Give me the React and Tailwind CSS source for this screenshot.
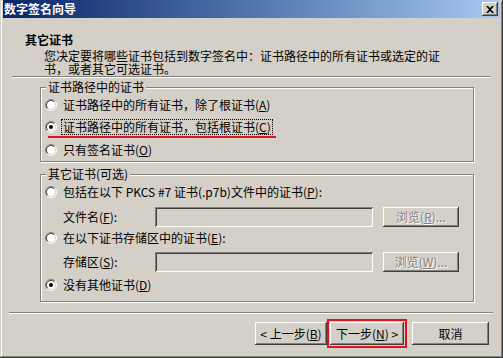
import React from "react";

const FONT = { fontFamily: '"Noto Sans CJK SC", "Noto Sans", sans-serif' };

function RadioIcon({ checked }) {
  return (
    <svg width="12" height="12" viewBox="0 0 12 12" className="shrink-0">
      <circle cx="6" cy="6" r="5" fill="#fff" />
      <path d="M2.1 9.9 A5.5 5.5 0 0 1 9.9 2.1" stroke="#808080" strokeWidth="1" fill="none" />
      <path d="M9.9 2.1 A5.5 5.5 0 0 1 2.1 9.9" stroke="#ffffff" strokeWidth="1" fill="none" />
      <path d="M2.8 9.2 A4.5 4.5 0 0 1 9.2 2.8" stroke="#404040" strokeWidth="1" fill="none" />
      <path d="M9.2 2.8 A4.5 4.5 0 0 1 2.8 9.2" stroke="#d4d0c8" strokeWidth="1" fill="none" />
      {checked && <circle cx="6" cy="6" r="2" fill="#000" />}
    </svg>
  );
}

function Radio({ checked, focus, children, className = "" }) {
  return (
    <div className={`relative flex items-center h-[16px] pl-[4px] ${className}`}>
      <RadioIcon checked={checked} />
      <span
        className={`ml-[4px] px-[1px] border leading-[14px] whitespace-nowrap ${
          focus ? "border-dotted border-black" : "border-transparent"
        }`}
      >
        {children}
      </span>
    </div>
  );
}

function Group({ title, className = "", children }) {
  return (
    <div
      className={`relative ml-[37px] w-[434px] border border-[#808080] shadow-[inset_1px_1px_0_#fff,1px_1px_0_#fff] ${className}`}
    >
      <span className="absolute left-[5px] top-[-8px] bg-[#d4d0c8] px-[2px] leading-[14px] whitespace-nowrap">
        {title}
      </span>
      {children}
    </div>
  );
}

const bevel =
  "bg-[#d4d0c8] shadow-[inset_-1px_-1px_#404040,inset_1px_1px_#fff,inset_-2px_-2px_#808080,inset_2px_2px_#d4d0c8]";

function Button({ children, className = "", disabled }) {
  return (
    <div
      className={`${bevel} flex items-center justify-center leading-[14px] whitespace-nowrap ${
        disabled ? "text-[#808080] [text-shadow:1px_1px_0_#fff]" : "text-black"
      } ${className}`}
    >
      {children}
    </div>
  );
}

function Input() {
  return (
    <div className="w-[218px] h-[20px] bg-[#d4d0c8] shadow-[inset_1px_1px_#808080,inset_-1px_-1px_#fff,inset_2px_2px_#404040,inset_-2px_-2px_#d4d0c8]" />
  );
}

function FieldRow({ label, browse, className = "" }) {
  return (
    <div className={`flex items-center pl-[22px] ${className}`}>
      <span className="w-[92px] leading-[14px] whitespace-nowrap">{label}</span>
      <Input />
      <Button disabled className="ml-[10px] w-[76px] h-[20px]">
        {browse}
      </Button>
    </div>
  );
}

function Sep({ className = "" }) {
  return <div className={`h-[2px] border-t border-t-[#808080] border-b border-b-white ${className}`} />;
}

export default function App() {
  return (
    <div
      style={FONT}
      className="w-[503px] h-[358px] overflow-hidden bg-[#d4d0c8] text-[12px] text-black flex flex-col px-[3px] pb-[3px] shadow-[inset_-1px_-1px_#404040,inset_1px_1px_#d4d0c8,inset_-2px_-2px_#808080,inset_2px_2px_#fff]"
    >
      {/* Title bar */}
      <div className="h-[18px] shrink-0 flex items-center justify-between bg-gradient-to-r from-[#0a246a] to-[#a6caf0] pl-[1px] pr-[2px]">
        <span className="text-white font-bold leading-[14px] whitespace-nowrap">数字签名向导</span>
        <div className={`${bevel} w-[16px] h-[14px] flex items-center justify-center`}>
          <svg width="8" height="7" viewBox="0 0 8 7">
            <path d="M0 0h2l2 2 2-2h2L5 3.5 8 7H6L4 5 2 7H0l3-3.5z" fill="#000" />
          </svg>
        </div>
      </div>

      {/* Header */}
      <div className="mt-[15px] pl-[22px]">
        <div className="font-bold leading-[13px] whitespace-nowrap">其它证书</div>
        <div className="mt-[3px] pl-[19px] leading-[13px] whitespace-nowrap">
          您决定要将哪些证书包括到数字签名中：证书路径中的所有证书或选定的证
          <br />
          书，或者其它可选证书。
        </div>
      </div>
      <Sep className="mt-[1px] ml-[9px] w-[478px]" />

      {/* Group 1 */}
      <Group title="证书路径中的证书" className="mt-[9px] pt-[9px] pb-[3px]">
        <Radio>
          证书路径中的所有证书，除了根证书(<u>A</u>)
        </Radio>
        <Radio checked focus className="mt-[6px]">
          证书路径中的所有证书，包括根证书(<u>C</u>)
          <span className="absolute left-[7px] top-[17px] w-[228px] h-[2px] bg-[#e0141e]" />
        </Radio>
        <Radio className="mt-[7px]">
          只有签名证书(<u>O</u>)
        </Radio>
      </Group>

      {/* Group 2 */}
      <Group title="其它证书(可选)" className="mt-[12px] pt-[9px] pb-[8px]">
        <Radio>
          包括在以下 PKCS #7 证书(.p7b)文件中的证书(<u>P</u>):
        </Radio>
        <FieldRow
          className="mt-[7px]"
          label={
            <>
              文件名(<u>F</u>):
            </>
          }
          browse={
            <>
              浏览(<u>R</u>)...
            </>
          }
        />
        <Radio className="mt-[3px]">
          在以下证书存储区中的证书(<u>E</u>):
        </Radio>
        <FieldRow
          className="mt-[6px]"
          label={
            <>
              存储区(<u>S</u>):
            </>
          }
          browse={
            <>
              浏览(<u>W</u>)...
            </>
          }
        />
        <Radio checked className="mt-[5px]">
          没有其他证书(<u>D</u>)
        </Radio>
      </Group>

      <Sep className="mt-[10px] ml-[6px] w-[484px]" />

      {/* Buttons */}
      <div className="mt-[8px] flex justify-end pr-[11px]">
        <Button className="w-[72px] h-[23px]">
          &lt; 上一步(<u>B</u>)
        </Button>
        <Button className="ml-[3px] w-[74px] h-[23px] outline-2 outline-solid outline-[#e0141e] outline-offset-[1px]">
          下一步(<u>N</u>) &gt;
        </Button>
        <Button className="ml-[8px] w-[77px] h-[23px]">取消</Button>
      </div>
    </div>
  );
}
